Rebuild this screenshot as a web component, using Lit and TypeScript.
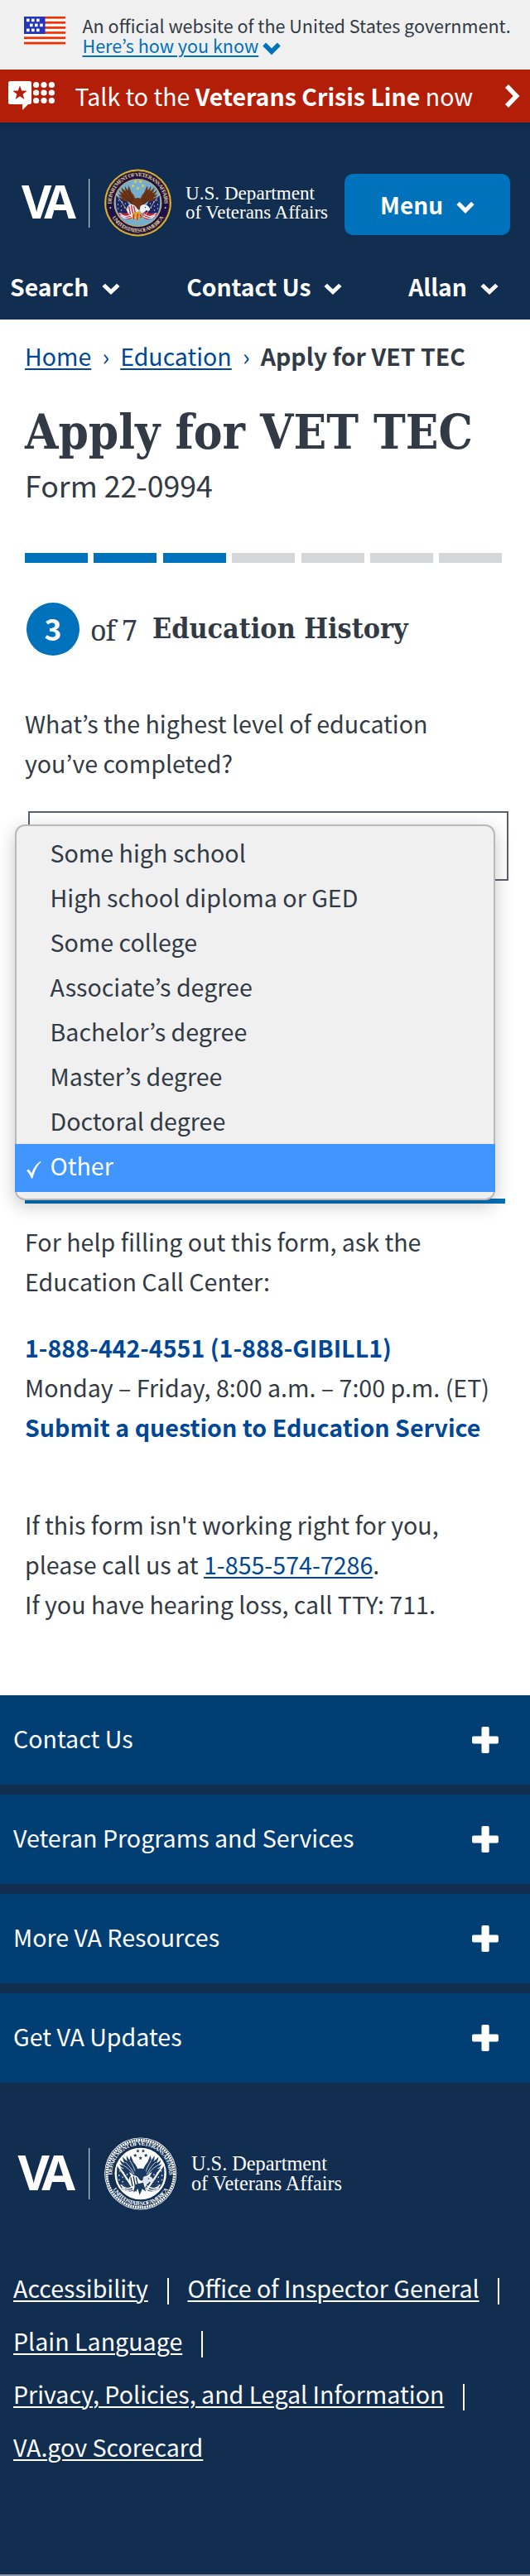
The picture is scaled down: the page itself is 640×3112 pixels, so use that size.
import { LitElement, html, svg, css } from "lit";
import { customElement } from "lit/decorators.js";
import { classMap } from "lit/directives/class-map.js";

const chevron = (w: number, h: number, stroke = 5) => html`
  <svg class="chev" width=${w} height=${h} viewBox="0 0 22 15" preserveAspectRatio="none">
    <path d="M2.2 2.6 L11 11.4 L19.8 2.6" fill="none" stroke="currentColor" stroke-width=${stroke} />
  </svg>`;

const star = (cx: number, cy: number, r: number) => {
  const pts: string[] = [];
  for (let i = 0; i < 10; i++) {
    const a = -Math.PI / 2 + (i * Math.PI) / 5;
    const q = i % 2 ? r * 0.4 : r;
    pts.push(`${(cx + q * Math.cos(a)).toFixed(2)},${(cy + q * Math.sin(a)).toFixed(2)}`);
  }
  return pts.join(" ");
};

const STARS: [number, number][] = [[-3, -25.5], [3, -25.5], [-6, -20.5], [6, -20.5], [0, -17.5]];

const LEFT_WING =
  "M-2 -1 C-3 -6 -5 -10 -8 -13 C-9 -16 -10 -18 -11 -20.5 C-12 -18 -12 -17 -11.6 -15 C-14 -17 -15 -19 -15.5 -20.5 C-16 -18 -15.5 -16 -14.5 -14 C-17 -15.5 -18.5 -17 -20 -19 C-20 -16 -19 -14 -17.5 -12 C-20 -12.5 -21.5 -14 -23 -15.5 C-22.5 -12.5 -21 -10.5 -19.5 -9.5 C-21 -9.5 -22.5 -10 -23.8 -11 C-22.5 -7.5 -20.5 -6.5 -18.5 -6 C-19.5 -5.6 -21 -5.6 -22 -6 C-19 -2.5 -15 -2 -12 -1.5 C-9 0 -7 3 -4 5 Z";

const seal = (c: { ring: string; edge: string; sky: string; text: string; wing: string; feather: string; flag: string; dots: string; stripe: string; base: string; head: string; star: string; mono: boolean }) => svg`
  <defs>
    <path id="arcTop" d="M-29.5 12.5 A32 32 0 1 1 29.5 12.5" />
    <path id="arcLow" d="M-33 14 A36 36 0 0 0 33 14" />
  </defs>
  <circle r="40.4" fill=${c.edge} />
  ${c.mono
    ? svg`<circle r="39.6" fill=${c.ring} /><circle r="37.7" fill="none" stroke="#fff" stroke-width="2.8" stroke-dasharray="1.9 .75" />`
    : svg`<circle r="38.4" fill=${c.ring} /><circle r="38" fill="none" stroke="#8a6a1c" stroke-width=".7" />`}
  <circle r=${c.mono ? 36 : 37.6} fill=${c.ring} />
  <circle r="29" fill=${c.edge} />
  <circle r="28.2" fill=${c.sky} />
  <text class="arc" fill=${c.text}><textPath href="#arcTop" startOffset="50%" text-anchor="middle" textLength="103">DEPARTMENT OF VETERANS AFFAIRS</textPath></text>
  <text class="arc" fill=${c.text}><textPath href="#arcLow" startOffset="50%" text-anchor="middle" textLength="75">UNITED STATES OF AMERICA</textPath></text>
  ${c.mono ? "" : svg`<circle cx="-33.2" cy="6" r="1" fill=${c.text} /><circle cx="33.2" cy="6" r="1" fill=${c.text} />`}
  ${STARS.map(([x, y]) => svg`<polygon points=${star(x, y, 2.4)} fill=${c.star} />`)}
  <g>
    ${[1, -1].map((s) => svg`
      <g transform="scale(${s} 1)">
        <path d="M-26 -9 C-22 -6 -17 -4 -13 -2 L-7 10 C-11 14 -18 13 -24 12 C-27 6 -27 -2 -26 -9Z" fill=${c.flag} />
        ${[[-23, -3], [-19, -1], [-15, 1], [-24, 2], [-20, 4], [-16, 6], [-12, 5], [-24, 7], [-20, 9], [-13, 9]].map(([x, y]) => svg`<circle cx=${x} cy=${y} r=".75" fill=${c.dots} />`)}
        <path d="M-24 12 C-18 14 -12 13 -8 10 L-5 16 C-9 22 -16 20 -21 17Z" fill=${c.stripe} />
        <path d="M-22 12.5 C-17 18 -12 17.5 -7 13.5 M-21 15.5 C-16 20 -10 19.5 -6 15.5" fill="none" stroke=${c.base} stroke-width="1.3" />
        <path d="M-26.5 -11 L-7 18" stroke=${c.mono ? "#fff" : "#d9cfa5"} stroke-width=${c.mono ? 2 : 0.8} />
        <path d=${LEFT_WING} fill=${c.wing} />
        <path d="M-5 0 C-7 -6 -9 -10 -12 -15 M-7 1 C-10 -6 -13 -9 -17 -13 M-9 0 C-13 -6 -16 -7 -20 -10" fill="none" stroke=${c.feather} stroke-width=".7" />
      </g>`)}
    <path d="M-6 -3 C-3 -7 3 -7 6 -3 C8 2 6 7 1 8 C-4 7 -8 2 -6 -3Z" fill=${c.wing} />
    <path d="M-13 6 C-12 1 -6 1 -3 4 L2 11 L-2 19 L-9 16 C-12 13 -14 10 -13 6Z" fill=${c.base} />
    <path d="M-11 4 L-9 14 M-8 3 L-5.5 16 M-5 4 L-2.5 15" stroke=${c.stripe} stroke-width="1.3" />
    <path d="M3 4 C6 1 12 2 14 6 C16 9 13 11 10 9 C8 12 5 13 2 11Z" fill=${c.head} />
    <path d="M-6 12 L-8 21 L-3 17 L-1 24 L2 17 L6 20 L3 10Z" fill=${c.mono ? c.wing : "#e0a32c"} />
    <path d="M-5 14 L-5 20 M0 13 L-1 21 M3 14 L4 18" stroke=${c.stripe} stroke-width="1.2" />
    <circle cx="9" cy="5.5" r=".7" fill=${c.flag} />
  </g>`;

const COLOR_SEAL = {
  ring: "#1d1147", edge: "#dfb233", sky: "#74afcf", text: "#e3cf8b", wing: "#6f3517", feather: "#3f1c0b",
  flag: "#1c2560", dots: "#c9d2ea", stripe: "#c22036", base: "#f6eeee", head: "#eef3f8", star: "#f4cf3a", mono: false,
};
const MONO_SEAL = {
  ring: "#112e51", edge: "#ffffff", sky: "#ffffff", text: "#ffffff", wing: "#1b3a61", feather: "#ffffff",
  flag: "#1b3a61", dots: "#ffffff", stripe: "#1b3a61", base: "#ffffff", head: "#dfe6ee", star: "#1b3a61", mono: true,
};

const OPTIONS = [
  "Some high school", "High school diploma or GED", "Some college", "Associate’s degree",
  "Bachelor’s degree", "Master’s degree", "Doctoral degree",
];
const BANDS = ["Contact Us", "Veteran Programs and Services", "More VA Resources", "Get VA Updates"];
const LEGAL = [["Accessibility", "Office of Inspector General"], ["Plain Language"], ["Privacy, Policies, and Legal Information"], ["VA.gov Scorecard"]];

@customElement("app-root")
export class AppRoot extends LitElement {
  static styles = css`
    :host { display: block; width: 640px; background: #fff; color: #323a45; font: 28.6px/48px "Noto Sans CJK KR", "Noto Sans", sans-serif; }
    * { box-sizing: border-box; margin: 0; }
    svg { display: block; flex: none; }
    a { color: #004795; text-decoration: underline; text-decoration-thickness: 2px; text-underline-offset: 3px; }
    p, span, a, h1, h2 { white-space: nowrap; }
    .gov { display: flex; height: 84px; background: #f0f0f0; padding-left: 29px; font-size: 21.55px; line-height: 24px; }
    .flag { margin-top: 20px; }
    .govtext { padding: 19px 0 0 20.5px; }
    .know { display: flex; align-items: flex-start; gap: 5px; color: #0071bb; }
    .know a { color: #0071bb; }
    .know .chev { margin-top: 8px; }
    .crisis { display: flex; align-items: center; height: 64px; background: #b31e09; color: #fff; font-size: 28.5px; }
    .crisis .badge { margin-left: 10px; }
    .crisis span { margin-left: 24.5px; flex: 1; }
    .crisis .next { margin-right: 12px; }
    header { height: 238px; color: #fff; font-weight: 700; background: linear-gradient(#0d2849, #112e51 14px); }
    .brand { display: flex; padding: 47px 24px 0 20px; justify-content: space-between; }
    .menu { display: flex; align-items: center; justify-content: center; gap: 16px; width: 200px; height: 74px; margin-top: 15px; border-radius: 10px; background: #0071bb; font-size: 28px; }
    .nav { display: flex; justify-content: space-between; padding: 26.6px 38px 0 12px; font-size: 28.3px; }
    .nav div { display: flex; align-items: center; gap: 16px; }
    .nav .chev, .menu .chev { margin-top: 7px; }
    .word { font: 700 56px "Open Sans", "Noto Sans", sans-serif; fill: #fff; }
    .dept { font-family: "Liberation Serif", serif; font-weight: 400; fill: #fff; }
    .arc { font: 700 6.6px "Liberation Serif", serif; }
    main { padding: 0 30px; }
    .crumbs { display: flex; padding-top: 20px; font-size: 28.5px; }
    .crumbs i { font-style: normal; width: 35px; text-align: center; color: #004795; }
    .crumbs b { color: #323a45; }
    h1 { margin-top: 37.7px; font: 700 57.9px/60px "DejaVu Serif Condensed", "DejaVu Serif", serif; font-stretch: condensed; }
    .form { margin-top: 10.8px; font-size: 35.7px; }
    .progress { display: grid; grid-template-columns: repeat(7, 76px); column-gap: 7.4px; height: 12px; margin-top: 57.5px; }
    .seg { background: #d6d7d9; }
    .seg.done { background: #0071bb; }
    .step { display: flex; align-items: center; height: 64px; margin: 48px 0 0 2px; }
    .num { width: 64px; height: 64px; border-radius: 50%; background: #0071bb; color: #fff; font-weight: 700; font-size: 35.5px; line-height: 62px; text-align: center; }
    .of { margin: 2px 0 0 13px; font: 34px/48px "Noto Serif", "DejaVu Serif", serif; letter-spacing: -1px; width: 62px; }
    h2 { margin: 0 0 2px 13px; font: 700 33.8px/48px "DejaVu Serif Condensed", "DejaVu Serif", serif; font-stretch: condensed; }
    .q { margin-top: 57.6px; }
    .field { position: relative; width: 580px; height: 84px; margin: 34.4px 0 0 4px; border: 2px solid #5b616b; }
    .popup { position: absolute; left: -18px; top: 14px; width: 580px; height: 454px; padding-top: 4.6px; border: 2px solid #b9b9b9; border-radius: 12px; background: #f0f0f0; box-shadow: 0 6px 22px rgba(0, 0, 0, .22); z-index: 1; }
    .opt { height: 54px; line-height: 54px; padding-left: 40.5px; white-space: nowrap; }
    .sel { display: flex; height: 58px; margin: 1.4px -2px 0; padding-left: 14px; line-height: 51.2px; background: #4095ff; color: #fff; }
    .sel svg { margin: 21px 10.5px 0 0; }
    .rule { height: 6px; width: 580px; margin-top: 384px; background: #0071bb; }
    .help { margin-top: 21.6px; }
    .contact { margin-top: 32px; }
    .contact b { color: #004795; }
    .issue { margin-top: 70px; }
    footer { margin-top: 86.4px; height: 1064px; background: #112e51; color: #fff; border-bottom: 2px solid #8896a9; }
    .bands { display: grid; row-gap: 12px; }
    .band { display: flex; align-items: center; justify-content: space-between; height: 108px; padding: 0 38px 0 16px; background: #003e73; }
    .band span { margin-bottom: 4px; }
    .flogo { margin: 59px 0 0 16px; }
    .legal { margin-top: 56.6px; padding-left: 16px; }
    .line { display: flex; align-items: center; height: 64px; }
    .line a { color: #fff; }
    .bar { width: 2px; height: 32px; margin: 9px 22.8px 0 22.8px; background: #fff; }
  `;

  render() {
    return html`
      <div class="gov">
        <svg class="flag" width="50" height="34" viewBox="0 0 50 34">
          <rect width="50" height="33.5" fill="#fff" />
          ${[0, 6.1, 12.2, 18.3, 24.6, 30.9].map((y) => svg`<rect y=${y - 0.4} width="50" height="3.2" fill="#f8a48e" /><rect y=${y} width="50" height="2.4" fill="#f22f00" />`)}
          <rect width="25.5" height="21" fill="#2135bf" />
          ${[[3, 3], [9, 3], [15, 3], [7, 9], [13, 9], [19.2, 9], [3, 15], [9, 15], [15, 15]].map(([x, y]) => svg`<rect x=${x} y=${y - 0.4} width="3.6" height="3.6" fill="#fff" />`)}
        </svg>
        <div class="govtext">
          <p>An official website of the United States government.</p>
          <p class="know"><a>Here’s how you know</a>${chevron(22, 15, 5.6)}</p>
        </div>
      </div>
      <div class="crisis">
        <svg class="badge" width="56" height="36" viewBox="0 0 56 36">
          <path d="M2.5 0H25.5Q28 0 28 2.5V25.5Q28 28 25.5 28H24L17 35V28H2.5Q0 28 0 25.5V2.5Q0 0 2.5 0Z" fill="#fff" />
          <polygon points=${star(14, 14.5, 9.2)} fill="#b31e09" />
          ${[33.6, 43, 52.4].map((x) => [4.5, 14, 23.5].map((y) => svg`<circle cx=${x} cy=${y} r="3.6" fill="#fff" />`))}
        </svg>
        <span>Talk to the <b>Veterans Crisis Line</b> now</span>
        <svg class="next" width="19" height="28" viewBox="0 0 19 28"><path d="M3 2L14.6 14L3 26" fill="none" stroke="#fff" stroke-width="5.6" /></svg>
      </div>
      <header>
        <div class="brand">
          <svg width="384" height="100" viewBox="20 195 384 100">
            <text class="word" x="26" y="264" textLength="66">VA</text>
            <rect x="107" y="216" width="1.3" height="59" fill="#b9c3cf" />
            <g transform="translate(166.5 245)">${seal(COLOR_SEAL)}</g>
            <text class="dept" font-size="24" x="224" y="241" textLength="156" lengthAdjust="spacingAndGlyphs">U.S. Department</text>
            <text class="dept" font-size="24" x="224" y="264" textLength="172" lengthAdjust="spacingAndGlyphs">of Veterans Affairs</text>
          </svg>
          <div class="menu"><span>Menu</span>${chevron(22, 15)}</div>
        </div>
        <div class="nav">
          <div><span>Search</span>${chevron(22, 14)}</div>
          <div><span>Contact Us</span>${chevron(22, 14)}</div>
          <div><span>Allan</span>${chevron(22, 14)}</div>
        </div>
      </header>
      <main>
        <div class="crumbs"><a>Home</a><i>›</i><a>Education</a><i>›</i><b>Apply for VET TEC</b></div>
        <h1>Apply for VET TEC</h1>
        <p class="form">Form 22-0994</p>
        <div class="progress">${[1, 2, 3, 4, 5, 6, 7].map((n) => html`<div class=${classMap({ seg: true, done: n <= 3 })}></div>`)}</div>
        <div class="step"><div class="num">3</div><span class="of">of 7</span><h2>Education History</h2></div>
        <p class="q">What’s the highest level of education<br />you’ve completed?</p>
        <div class="field">
          <div class="popup">
            ${OPTIONS.map((o) => html`<div class="opt">${o}</div>`)}
            <div class="sel">
              <svg width="18" height="21" viewBox="0 0 18 21"><path d="M0 11.2L2.6 9.6L6.2 14.2C8.6 7.6 12 2.8 16.6 0L17.6 .8C12.6 5.4 9.6 12 7.4 20.4H5.8C4.4 16.6 2.4 13.4 0 11.2Z" fill="#fff" /></svg>
              <span>Other</span>
            </div>
          </div>
        </div>
        <div class="rule"></div>
        <p class="help">For help filling out this form, ask the<br />Education Call Center:</p>
        <p class="contact"><b>1-888-442-4551 (1-888-GIBILL1)</b><br />Monday – Friday, 8:00 a.m. – 7:00 p.m. (ET)<br /><b>Submit a question to Education Service</b></p>
        <p class="issue">If this form isn't working right for you,<br />please call us at <a>1-855-574-7286</a>.<br />If you have hearing loss, call TTY: 711.</p>
      </main>
      <footer>
        <div class="bands">
          ${BANDS.map((b) => html`<div class="band"><span>${b}</span>
            <svg width="32" height="32" viewBox="0 0 32 32"><rect x="11.5" width="9.2" height="32" rx="1.8" fill="#fff" /><rect y="11.6" width="32" height="9" rx="1.8" fill="#fff" /></svg></div>`)}
        </div>
        <svg class="flogo" width="410" height="100" viewBox="16 2575 410 100">
          <text class="word" style="font-size:59px" x="21.5" y="2646" textLength="69.5">VA</text>
          <rect x="107" y="2595" width="1.3" height="62" fill="#b9c3cf" />
          <g transform="translate(169.7 2626) scale(1.078)">${seal(MONO_SEAL)}</g>
          <text class="dept" font-size="25.4" x="231" y="2621.5" textLength="164" lengthAdjust="spacingAndGlyphs">U.S. Department</text>
          <text class="dept" font-size="25.4" x="231" y="2646" textLength="182" lengthAdjust="spacingAndGlyphs">of Veterans Affairs</text>
        </svg>
        <div class="legal">
          ${LEGAL.map((row, i) => html`<div class="line">${row.map((t) => html`<a>${t}</a>${i < 3 ? html`<div class="bar"></div>` : ""}`)}</div>`)}
        </div>
      </footer>`;
  }
}
